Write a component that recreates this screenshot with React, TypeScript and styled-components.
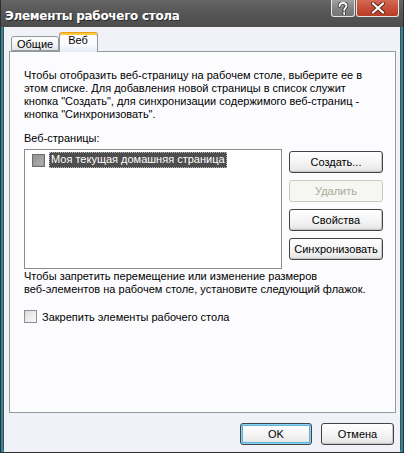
import React from 'react'
import styled, { createGlobalStyle } from 'styled-components'

const GlobalStyle = createGlobalStyle`
  html, body {
    margin: 0;
    padding: 0;
    background: #ffffff;
  }
  body {
    font-family: "Liberation Sans", Arial, sans-serif;
    font-size: 11px;
    color: #000;
  }
`;

const Window = styled.div`
  width: 404px;
  height: 453px;
  box-sizing: border-box;
  display: flex;
  flex-direction: column;
  background: #4b4b4b;
  border-left: 1px solid #2f2f2f;
  border-right: 1px solid #2f2f2f;
  border-bottom: 1px solid #2f2f2f;
  padding: 0 3px 3px 3px;
  box-shadow: inset 2px 0 0 #2a8aa3, inset -2px 0 0 #2a8aa3, inset 0 -2px 0 #2a8aa3;
`;

const TitleBar = styled.div`
  height: 27px;
  flex: none;
  display: flex;
  align-items: flex-start;
  margin: 0 -3px;
  padding-left: 4px;
  background: linear-gradient(180deg, #666666 0%, #585858 40%, #4c4c4c 100%);
`;

const Title = styled.div`
  font-family: "DejaVu Sans", sans-serif;
  font-weight: bold;
  font-size: 12px;
  color: #ffffff;
  line-height: 16px;
  margin-top: 8px;
  letter-spacing: -0.3px;
  text-shadow: 1px 1px 0 #2a2a2a;
`;

const Controls = styled.div`
  margin-left: auto;
  margin-right: 4px;
  display: flex;
  gap: 1px;
`;

const CaptionButton = styled.div<{ $close?: boolean }>`
  height: 17px;
  width: ${p => (p.$close ? '43px' : '24px')};
  box-sizing: border-box;
  display: flex;
  align-items: center;
  justify-content: center;
  border: 1px solid #e6e6e6;
  border-top: none;
  border-radius: 0 0 3px 3px;
  background: ${p =>
    p.$close
      ? 'linear-gradient(180deg, #d36a55 0%, #c84e38 50%, #b83d28 100%)'
      : 'linear-gradient(180deg, #a2a2a2 0%, #848484 50%, #747474 100%)'};
`;

const Client = styled.div`
  flex: 1;
  display: flex;
  flex-direction: column;
  background: #f1f2f7;
  padding: 6px 4px 7px 5px;
`;

const TabStrip = styled.div`
  display: flex;
  align-items: flex-end;
  height: 18px;
  padding-left: 2px;
  position: relative;
  z-index: 1;
`;

const Tab = styled.div<{ $active?: boolean }>`
  box-sizing: border-box;
  height: ${p => (p.$active ? '20px' : '15px')};
  margin-bottom: ${p => (p.$active ? '-1px' : '0')};
  padding: ${p => (p.$active ? '1px 9px 0 8px' : '1px 5px 0 5px')};
  border: 1px solid #919b9c;
  border-bottom: ${p => (p.$active ? 'none' : '1px solid #919b9c')};
  border-radius: 3px 3px 0 0;
  background: ${p =>
    p.$active
      ? 'linear-gradient(180deg, #fcfcfe 0%, #fcfcfe 55%, #e3ecf7 100%)'
      : 'linear-gradient(180deg, #fefefe 0%, #f2f2f4 60%, #e3e3e8 100%)'};
  box-shadow: ${p => (p.$active ? 'inset 0 2px 0 #ffc83c' : 'none')};
  border-top-color: ${p => (p.$active ? '#e6a01a' : '#919b9c')};
  line-height: 13px;
  font-size: 11px;
`;

const Panel = styled.div`
  height: 362px;
  box-sizing: border-box;
  border: 1px solid #919b9c;
  background: #fcfcfe;
  padding: 17px 10px 0 14px;
  display: flex;
  flex-direction: column;
`;

const Text = styled.p`
  margin: 0;
  line-height: 13px;
  font-size: 11px;
`;

const Label = styled(Text)`
  margin-top: 11px;
`;

const ListRow = styled.div`
  display: flex;
  align-items: flex-start;
  margin-top: 4px;
  gap: 7px;
`;

const ListBox = styled.div`
  width: 258px;
  height: 120px;
  box-sizing: border-box;
  border: 1px solid #8c8c8c;
  background: #ffffff;
  padding: 2px 0 0 7px;
`;

const ListItem = styled.div`
  display: flex;
  align-items: center;
  gap: 4px;
`;

const CheckBox = styled.span<{ $dark?: boolean }>`
  width: 13px;
  height: 13px;
  box-sizing: border-box;
  flex: none;
  display: inline-block;
  border: 1px solid ${p => (p.$dark ? '#6e6e6e' : '#8f8f8f')};
  background: ${p =>
    p.$dark
      ? 'linear-gradient(135deg, #8e8e8e 0%, #a6a6a6 60%, #b6b6b6 100%)'
      : 'linear-gradient(135deg, #dcdcdc 0%, #ececec 50%, #fbfbfb 100%)'};
  box-shadow: ${p => (p.$dark ? 'inset 0 0 0 1px #9a9a9a' : 'none')};
`;

const Selected = styled.span`
  background: #4e4e4e;
  color: #ffffff;
  outline: 1px dotted #b8b8b8;
  outline-offset: -1px;
  padding: 1px 2px 2px 2px;
  line-height: 13px;
`;

const ButtonColumn = styled.div`
  display: flex;
  flex-direction: column;
  gap: 7px;
  margin-top: 2px;
`;

const Button = styled.button<{ $w?: number; $focus?: boolean }>`
  width: ${p => p.$w ?? 94}px;
  height: 22px;
  box-sizing: border-box;
  padding: 0;
  font-family: "Liberation Sans", Arial, sans-serif;
  font-size: 11px;
  color: #000;
  border: 1px solid #444;
  border-radius: 3px;
  background: linear-gradient(180deg, #ffffff 0%, #f6f6f6 45%, #ebebeb 85%, #d6d6d6 100%);
  box-shadow: ${p =>
    p.$focus
      ? 'inset 0 0 0 1px #8cd2f0, inset 0 0 0 2px #5fb4de'
      : 'inset -1px -1px 0 #c8c8c8'};

  &:disabled {
    color: #aca899;
    border-color: #cbc9be;
    background: #f6f6f3;
    box-shadow: none;
  }
`;

const BottomText = styled(Text)`
  margin-top: 1px;
`;

const CheckRow = styled.label`
  display: flex;
  align-items: center;
  gap: 5px;
  margin-top: 14px;
`;

const Footer = styled.div`
  display: flex;
  justify-content: flex-end;
  gap: 9px;
  margin-top: 10px;
  padding-right: 2px;
`;

const HelpIcon = () => (
  <svg width="12" height="13" viewBox="0 0 12 13">
    <path
      d="M2.5 4 C2.5 1.5 4.2 1 6 1 C8 1 9.5 2 9.5 3.8 C9.5 5.6 7.2 6 7.2 8 M7.2 10.3 L7.2 12"
      fill="none"
      stroke="#3c3c3c"
      strokeWidth="3.6"
      strokeLinecap="round"
    />
    <path
      d="M2.5 4 C2.5 1.5 4.2 1 6 1 C8 1 9.5 2 9.5 3.8 C9.5 5.6 7.2 6 7.2 8 M7.2 10.3 L7.2 12"
      fill="none"
      stroke="#ffffff"
      strokeWidth="1.8"
      strokeLinecap="round"
    />
  </svg>
)

const CloseIcon = () => (
  <svg width="14" height="12" viewBox="0 0 14 12">
    <path d="M2 1.5 L12 10.5 M12 1.5 L2 10.5" stroke="#5a2418" strokeWidth="4" strokeLinecap="round" />
    <path d="M2 1.5 L12 10.5 M12 1.5 L2 10.5" stroke="#ffffff" strokeWidth="2.2" strokeLinecap="round" />
  </svg>
)

const App = () => {
  return (
    <>
      <GlobalStyle />
      <Window>
        <TitleBar>
          <Title>Элементы рабочего стола</Title>
          <Controls>
            <CaptionButton><HelpIcon /></CaptionButton>
            <CaptionButton $close><CloseIcon /></CaptionButton>
          </Controls>
        </TitleBar>
        <Client>
          <TabStrip>
            <Tab>Общие</Tab>
            <Tab $active>Веб</Tab>
          </TabStrip>
          <Panel>
            <Text>
              Чтобы отобразить веб-страницу на рабочем столе, выберите ее в<br />
              этом списке. Для добавления новой страницы в список служит<br />
              кнопка "Создать", для синхронизации содержимого веб-страниц -<br />
              кнопка "Синхронизовать".
            </Text>
            <Label>Веб-страницы:</Label>
            <ListRow>
              <ListBox>
                <ListItem>
                  <CheckBox $dark />
                  <Selected>Моя текущая домашняя страница</Selected>
                </ListItem>
              </ListBox>
              <ButtonColumn>
                <Button>Создать...</Button>
                <Button disabled>Удалить</Button>
                <Button>Свойства</Button>
                <Button>Синхронизовать</Button>
              </ButtonColumn>
            </ListRow>
            <BottomText>
              Чтобы запретить перемещение или изменение размеров<br />
              веб-элементов на рабочем столе, установите следующий флажок.
            </BottomText>
            <CheckRow>
              <CheckBox />
              <span>Закрепить элементы рабочего стола</span>
            </CheckRow>
          </Panel>
          <Footer>
            <Button $w={72} $focus>OK</Button>
            <Button $w={73}>Отмена</Button>
          </Footer>
        </Client>
      </Window>
    </>
  )
}

export default App
